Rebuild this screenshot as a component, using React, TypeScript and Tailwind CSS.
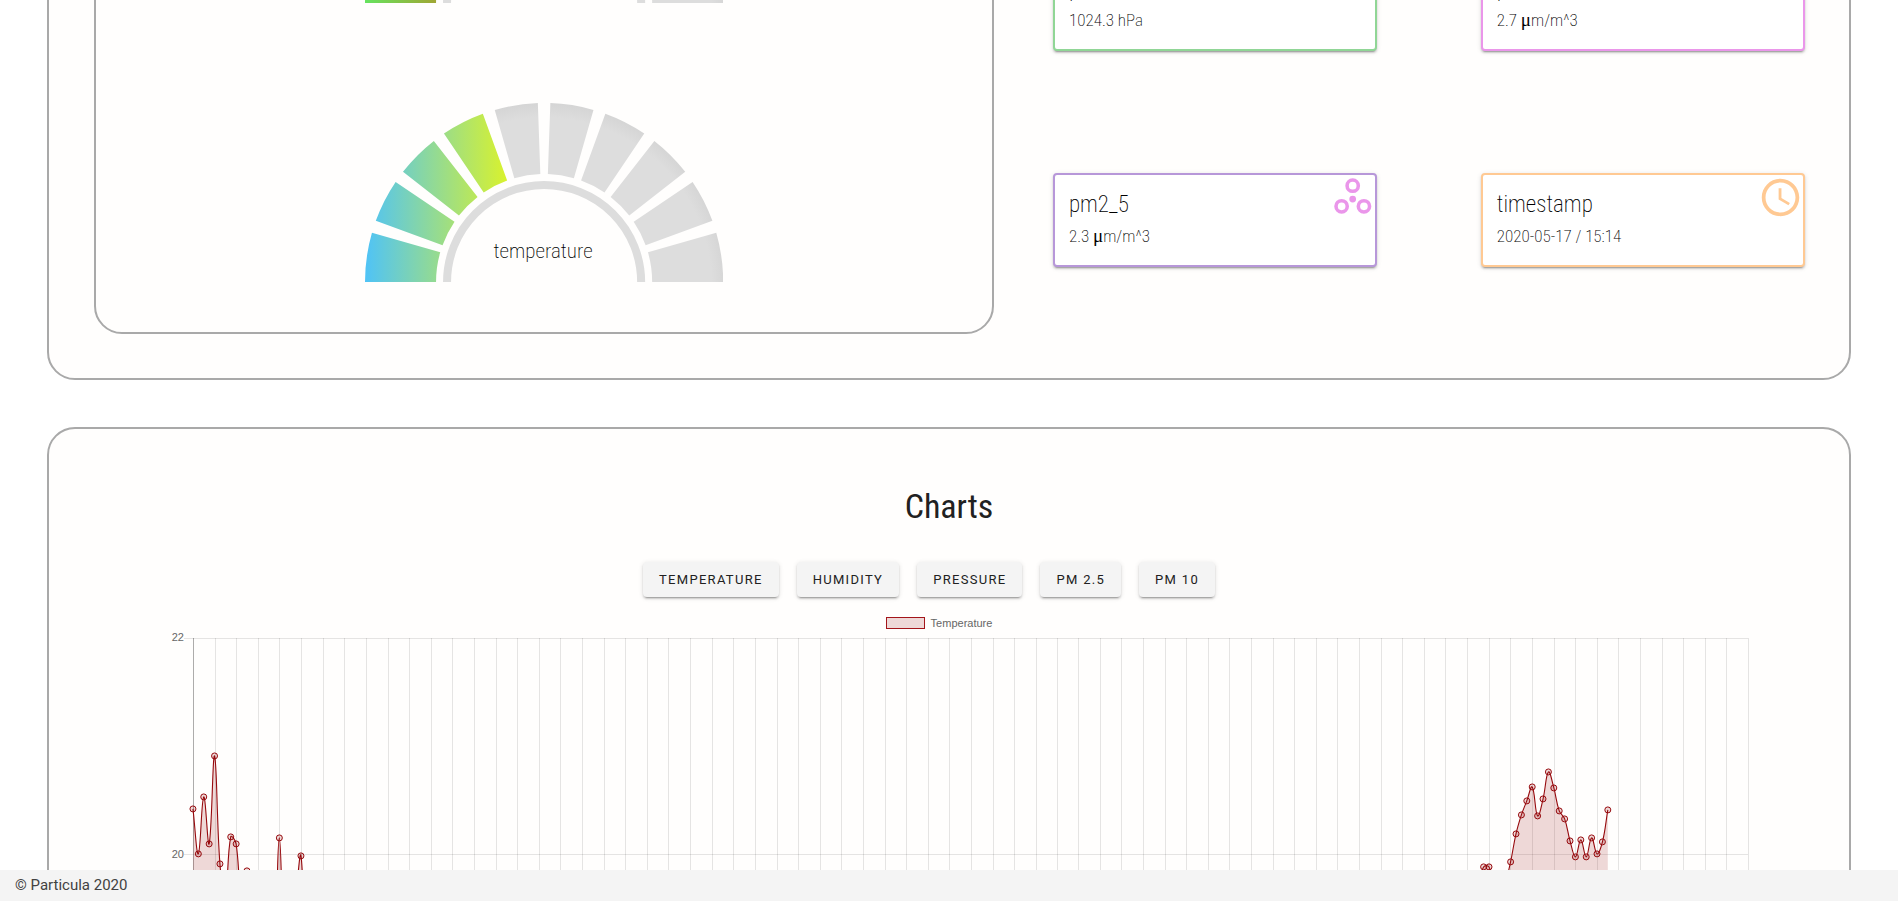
import type { ReactNode } from "react";

const CONDENSED = "font-['Roboto_Condensed',Roboto,sans-serif]";

/* ---------- gauges ---------- */

type GaugeProps = { id: string; title?: string; filled: number; from: string; to: string; span: number };

const CX = 179;
const CY = 179;

function polar(r: number, deg: number) {
  const a = (deg * Math.PI) / 180;
  return `${(CX - r * Math.cos(a)).toFixed(2)} ${(CY - r * Math.sin(a)).toFixed(2)}`;
}

function segmentPath(i: number) {
  const a = i === 0 ? 0 : i * 18 + 2;
  const b = i === 9 ? 180 : (i + 1) * 18 - 2;
  return `M${polar(179, a)}A179 179 0 0 1 ${polar(179, b)}L${polar(108, b)}A108 108 0 0 0 ${polar(108, a)}Z`;
}

function Gauge({ id, title, filled, from, to, span }: GaugeProps) {
  return (
    <svg viewBox="0 0 358 179" className="block w-[40%]" role="img">
      <defs>
        <linearGradient id={id} gradientUnits="userSpaceOnUse" x1="0" x2={span} y1="0" y2="0">
          <stop offset="0" stopColor={from} />
          <stop offset="1" stopColor={to} />
        </linearGradient>
        <radialGradient id={`${id}-rest`} gradientUnits="userSpaceOnUse" cx="179" cy="182" r="182">
          <stop offset="0.92" stopColor="#dddddd" />
          <stop offset="1" stopColor="#d5d5d5" />
        </radialGradient>
      </defs>
      {Array.from({ length: 10 }, (_, i) => (
        <path key={i} d={segmentPath(i)} fill={i < filled ? `url(#${id})` : `url(#${id}-rest)`} />
      ))}
      <path d="M82 179A97 97 0 0 1 276 179" fill="none" stroke="#dddddd" strokeWidth="8" />
      {title && (
        <text x="178" y="155" textAnchor="middle" className={`${CONDENSED} fill-black text-[21px] font-extralight`}>
          {title}
        </text>
      )}
    </svg>
  );
}

/* ---------- value cards ---------- */

function ParticlesIcon() {
  return (
    <svg viewBox="0 0 24 24" className="size-[45px]" aria-hidden="true">
      <g fill="none" stroke="#ea96ea" strokeWidth="1.9">
        <circle cx="12.1" cy="5.7" r="3" />
        <circle cx="6.2" cy="16.7" r="3" />
        <circle cx="18.1" cy="16.7" r="3" />
      </g>
      <circle cx="12.1" cy="12.8" r="1.8" fill="#ea96ea" />
    </svg>
  );
}

function ClockIcon() {
  return (
    <svg viewBox="0 0 24 24" className="size-[45px]" fill="#ffc993" aria-hidden="true">
      <path d="M11.99 2C6.47 2 2 6.48 2 12s4.47 10 9.99 10C17.52 22 22 17.52 22 12S17.52 2 11.99 2zM12 20c-4.42 0-8-3.58-8-8s3.58-8 8-8 8 3.58 8 8-3.58 8-8 8zm.5-13H11v6l5.25 3.15.75-1.23-4.5-2.67z" />
    </svg>
  );
}

function Card({ title, border, icon, children }: { title: string; border: string; icon?: ReactNode; children: ReactNode }) {
  return (
    <article
      className={`flex h-[94px] items-start justify-between rounded border-2 bg-white pl-3.5 shadow-[0_3px_1px_-2px_rgba(0,0,0,0.2),0_2px_2px_0_rgba(0,0,0,0.14),0_1px_5px_0_rgba(0,0,0,0.12)] ${border}`}
    >
      <div className={`${CONDENSED} pt-4 font-extralight text-black`}>
        <h2 className="text-[23px] leading-7">{title}</h2>
        <p className="text-[17px] leading-[34px]">{children}</p>
      </div>
      {icon}
    </article>
  );
}

function Density({ value }: { value: string }) {
  return (
    <>
      {value} <span className="font-['Liberation_Serif',serif] text-[19px] leading-none font-normal">μ</span>m/m^3
    </>
  );
}

/* ---------- chart ---------- */

type Point = { x: number; y: number };

const STEP = 5.403;
const AXIS_X = 144;

const KNOWN: Record<number, number> = {
  0: 171, 1: 216, 2: 159, 3: 206, 4: 118, 5: 226, 6: 258, 7: 199, 8: 206, 9: 270, 10: 233, 11: 258,
  15: 310, 16: 200, 17: 310, 19: 258, 20: 218, 21: 330,
  238: 250, 239: 229, 240: 229, 241: 252, 242: 262, 243: 246,
  244: 224, 245: 196, 246: 177, 247: 163, 248: 149, 249: 178, 250: 161, 251: 134, 252: 150, 253: 173,
  254: 181, 255: 203, 256: 219, 257: 202, 258: 219, 259: 200, 260: 216, 261: 204, 262: 172,
};

const POINTS: Point[] = Array.from({ length: 263 }, (_, i) => ({
  x: AXIS_X + i * STEP,
  y: KNOWN[i] ?? 290 + (i % 3) * 6,
}));

function splinePath(points: Point[]) {
  const handles = points.map((p, i) => {
    const prev = points[i - 1] ?? p;
    const next = points[i + 1] ?? p;
    const before = Math.hypot(p.x - prev.x, p.y - prev.y);
    const after = Math.hypot(next.x - p.x, next.y - p.y);
    const a = (0.4 * before) / (before + after);
    const b = (0.4 * after) / (before + after);
    const dx = next.x - prev.x;
    const dy = next.y - prev.y;
    return { inX: p.x - a * dx, inY: p.y - a * dy, outX: p.x + b * dx, outY: p.y + b * dy };
  });
  const parts = points.slice(1).map((p, i) => {
    const from = handles[i];
    const to = handles[i + 1];
    return [from.outX, from.outY, to.inX, to.inY, p.x, p.y].map((n) => n.toFixed(1)).join(" ");
  });
  return `M${points[0].x} ${points[0].y}C${parts.join("C")}`;
}

const LINE = splinePath(POINTS);
const LAST_X = POINTS[POINTS.length - 1].x;

function TemperatureChart() {
  return (
    <svg viewBox="0 0 1800 400" className="block w-full overflow-visible" role="img" aria-label="Temperature chart">
      <g stroke="rgba(0,0,0,0.1)" shapeRendering="crispEdges">
        {Array.from({ length: 72 }, (_, i) => {
          const x = Math.round(AXIS_X + (i + 1) * STEP * 4) + 0.5;
          return <line key={i} x1={x} x2={x} y1="0" y2="400" />;
        })}
        <line x1="135" x2="1700" y1="0.5" y2="0.5" />
        <line x1="135" x2="1700" y1="216.5" y2="216.5" />
      </g>
      <line x1="144.5" x2="144.5" y1="0" y2="400" stroke="rgba(0,0,0,0.32)" shapeRendering="crispEdges" />
      <path d={`${LINE}L${LAST_X} 400L${AXIS_X} 400Z`} fill="#8b0000" fillOpacity="0.15" />
      <path d={LINE} fill="none" stroke="#96090d" strokeWidth="1.1" strokeLinejoin="round" />
      <g fill="#8b0000" fillOpacity="0.15" stroke="#96090d">
        {POINTS.filter((p) => p.y < 250).map((p) => (
          <circle key={p.x} cx={p.x} cy={p.y} r="3" />
        ))}
      </g>
      <g className="fill-[#666666] font-['Liberation_Sans',Arial,sans-serif] text-[11px]" textAnchor="end">
        <text x="135" y="3">22</text>
        <text x="135" y="220">20</text>
      </g>
    </svg>
  );
}

const SERIES = ["Temperature", "Humidity", "Pressure", "PM 2.5", "PM 10"];

const SECTION = "mx-[2.5%] rounded-[28px] border-2 border-[#a9a9a9] bg-[#fffefd]";

export default function App() {
  return (
    <div className="flex h-screen flex-col bg-white font-[Roboto,sans-serif]">
      <main className="min-h-0 flex-1 overflow-hidden">
        <section className={`${SECTION} -mt-[274px] flex p-11 pl-[45px]`}>
          <div className="flex w-[52.6%] flex-col items-center gap-[100px] rounded-[28px] border-2 border-[#a9a9a9] py-[50px]">
            <Gauge id="gauge-humidity" filled={1} from="#66e35f" to="#d96a08" span={142} />
            <Gauge id="gauge-temperature" title="temperature" filled={4} from="#4fc3f7" to="#d9f22d" span={142} />
          </div>
          <div className="grid flex-1 grid-cols-2 content-end gap-x-[104px] gap-y-[122px] pb-[67px] pl-[59px]">
            <Card title="pressure" border="border-[#90d696]">1024.3 hPa</Card>
            <Card title="pm10" border="border-[#ea96ea]" icon={<ParticlesIcon />}>
              <Density value="2.7" />
            </Card>
            <Card title="pm2_5" border="border-[#b797d9]" icon={<ParticlesIcon />}>
              <Density value="2.3" />
            </Card>
            <Card title="timestamp" border="border-[#ffc993]" icon={<ClockIcon />}>2020-05-17 / 15:14</Card>
          </div>
        </section>

        <section className={`${SECTION} mt-[47px] pt-[50px]`}>
          <h1 className={`${CONDENSED} text-center text-[34px] leading-[54px] font-normal text-[#212121]`}>Charts</h1>
          <div className="mt-[29px] flex justify-center gap-[18px] pr-10">
            {SERIES.map((name) => (
              <button
                key={name}
                type="button"
                className="h-[35px] rounded bg-[#f4f4f4] px-4 text-[13px] font-normal tracking-widest text-[#212121] uppercase shadow-[0_3px_1px_-2px_rgba(0,0,0,0.2),0_2px_2px_0_rgba(0,0,0,0.14),0_1px_5px_0_rgba(0,0,0,0.12)]"
              >
                {name}
              </button>
            ))}
          </div>
          <div className="mt-5 mb-[9px] flex h-3 items-center justify-center gap-1.5 pr-5 font-['Liberation_Sans',Arial,sans-serif] text-[11px] text-[#666666]">
            <span className="h-3 w-[39px] border border-[#a3151a] bg-[#8b0000]/15" />
            Temperature
          </div>
          <TemperatureChart />
        </section>
      </main>
      <footer className="h-[31px] bg-[#f4f4f4] px-[15px] text-[15px] leading-[31px] text-[#424242]">© Particula 2020</footer>
    </div>
  );
}
